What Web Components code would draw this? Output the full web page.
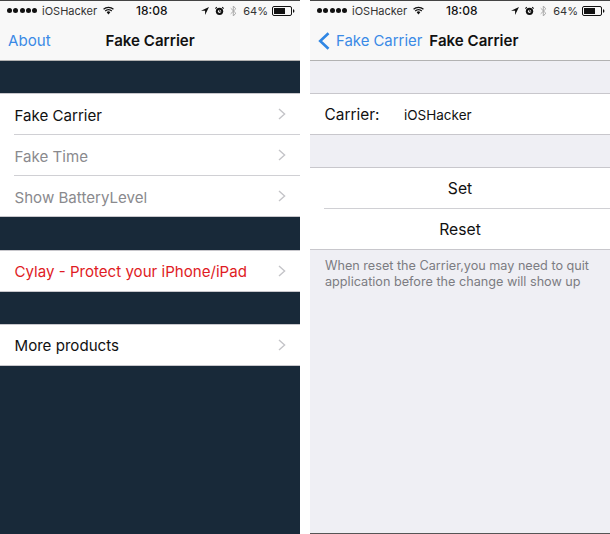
<!DOCTYPE html>
<html><head><meta charset="utf-8">
<style>
html,body{margin:0;padding:0;background:#fff;}
body{width:610px;height:534px;overflow:hidden;font-family:"Inter","Liberation Sans",sans-serif;}
.wrap{display:flex;gap:10px;width:610px;height:534px;}
</style></head><body>
<div class="wrap">
<phone-screen theme="dark">
  <status-bar></status-bar>
  <nav-bar title="Fake Carrier" left="About"></nav-bar>
  <table-group style="--nudge:2px">
    <table-row chevron>Fake Carrier</table-row>
    <table-row chevron muted>Fake Time</table-row>
    <table-row chevron muted>Show BatteryLevel</table-row>
  </table-group>
  <table-group style="margin-top:33px">
    <table-row chevron danger>Cylay - Protect your iPhone/iPad</table-row>
  </table-group>
  <table-group>
    <table-row chevron>More products</table-row>
  </table-group>
</phone-screen>
<phone-screen theme="light">
  <status-bar></status-bar>
  <nav-bar title="Fake Carrier" left="Fake Carrier" back></nav-bar>
  <table-group>
    <table-row label="Carrier:">iOSHacker</table-row>
  </table-group>
  <table-group>
    <table-row center>Set</table-row>
    <table-row center>Reset</table-row>
  </table-group>
  <foot-note>When reset the Carrier,you may need to quit application before the change will show up</foot-note>
</phone-screen>
</div>
<script>
const def=(n,html)=>customElements.define(n,class extends HTMLElement{
  connectedCallback(){ if(this.shadowRoot) return; const r=this.attachShadow({mode:'open'}); r.innerHTML=typeof html==='function'?html(this):html; }
});
def('phone-screen',el=>`<style>
:host{display:block;width:300px;height:534px;box-sizing:border-box;border-top:1px solid #444;overflow:hidden;background:${el.getAttribute('theme')==='dark'?'#182939':'#efeff4'};${el.getAttribute('theme')==='light'?'border-bottom:1px solid #555;':''}}
</style><slot></slot>`);
def('status-bar',`<style>
:host{display:flex;align-items:center;height:20px;padding-bottom:1px;box-sizing:border-box;background:#f8f8f8;color:#333;font:400 11px "Inter","Liberation Sans",sans-serif;}
.l{display:flex;align-items:center;padding-left:7px;flex:0 0 129px;}
.d{display:flex;gap:1.25px;margin-right:5px}
.d i{width:5px;height:5px;border-radius:50%;background:#111;display:block}
.c{width:40px;flex:none;font-size:12px;color:#111;font-weight:500;}
.r{display:flex;align-items:center;margin-left:auto;padding-right:5px;gap:6px}
svg{display:block}
</style>
<div class="l"><span class="d"><i></i><i></i><i></i><i></i><i></i></span><span>iOSHacker</span>
<svg style="margin-left:6px" width="11" height="9" viewBox="0 0 12 9"><path d="M.6 3.2A8 8 0 0 1 11.4 3.2M2.4 5.1A5.2 5.2 0 0 1 9.6 5.1" fill="none" stroke="#111" stroke-width="1.4"/><path d="M4 6.4A2.8 2.8 0 0 1 8 6.4L6 8.8z" fill="#111"/></svg></div>
<span class="c">18:08</span>
<div class="r">
<svg width="8" height="8" viewBox="0 0 9 9"><path d="M9 0 0 4.2h4.6V9z" fill="#111"/></svg>
<svg width="9" height="10" viewBox="0 0 10 10"><circle cx="5" cy="5.4" r="4.1" fill="#111"/><circle cx="5" cy="5.4" r="1.7" fill="#f8f8f8"/><path d="M5 3.8V5.6H6.4" stroke="#111" fill="none" stroke-width=".8"/><path d="M.4 2.4 2 .6M9.6 2.4 8 .6" stroke="#111" stroke-width="1.3"/></svg>
<svg width="7" height="12" viewBox="0 0 7 12"><path d="M.7 3.2 5.8 8.2 3.3 11V1L5.8 3.8.7 8.8" fill="none" stroke="#aaa" stroke-width="1"/></svg>
<span>64%</span>
<svg style="margin-left:-2px" width="23" height="10" viewBox="0 0 23 10"><rect x=".5" y=".5" width="19" height="9" rx="1.5" fill="none" stroke="#111"/><rect x="2" y="2" width="11" height="6" fill="#111"/><path d="M21 3.2c1 .2 1.4.8 1.4 1.8s-.4 1.6-1.4 1.8z" fill="#111"/></svg>
</div>`);
def('nav-bar',el=>{
 const back=el.hasAttribute('back');
 return `<style>
:host{display:flex;align-items:center;height:39px;background:#f8f8f8;border-bottom:1px solid #b2b2b2;box-sizing:content-box;font:400 ${back?14.9:15.1}px "Inter","Liberation Sans",sans-serif;}
.l{display:flex;align-items:center;color:#3b8ae6;padding-left:8px;gap:6px;white-space:nowrap;flex:none}
.t{font-weight:600;font-size:15.1px;color:#111;white-space:nowrap;margin-left:${back?'7':'55'}px}
svg{display:block}
</style><div class="l">${back?'<svg width="12" height="18" viewBox="0 0 12 18"><path d="M10.5 1.2 2.2 9l8.3 7.8" fill="none" stroke="#2f86e4" stroke-width="2.6"/></svg>':''}<span>${el.getAttribute('left')}</span></div><span class="t">${el.getAttribute('title')}</span>`});
def('table-group',`<style>
:host{display:block;margin-top:32px;background:#fff;border-top:1px solid #c8c7cc;border-bottom:1px solid #c8c7cc;box-sizing:border-box}
</style><slot></slot>`);
def('table-row',el=>{
 const c=el.hasAttribute('danger')?'#e01b24':el.hasAttribute('muted')?'#8a8a8e':'#111';
 const center=el.hasAttribute('center');
 const label=el.getAttribute('label');
 return `<style>
:host{display:block;font:400 ${center?15.7:label?15.4:15.1}px "Inter","Liberation Sans",sans-serif;color:${c}}
:host(:not(:first-child)) .in{border-top:1px solid #d0d0d4}
.o{padding-left:14px}
.in{height:40px;display:flex;align-items:center;padding-right:14px;white-space:nowrap;padding-left:${center?0:.5}px;${center?'justify-content:center;':''}}
.tx{padding-top:var(--nudge,0)}
.lb{width:79.5px;flex:none}
.v{font-size:13.5px;padding-top:2px}
svg{margin-left:auto;display:block}
</style><div class="o"><div class="in">${label?`<span class="lb">${label}</span><span class="v"><slot></slot></span>`:'<span class="tx"><slot></slot></span>'}${el.hasAttribute('chevron')?'<svg width="8" height="12" viewBox="0 0 8 12"><path d="M1 1l5.6 5L1 11" fill="none" stroke="#c4c4c8" stroke-width="1.4"/></svg>':''}</div></div>`});
def('foot-note',`<style>
:host{display:block;padding:8px 15px;font:400 12.65px/15.7px "Inter","Liberation Sans",sans-serif;color:#7c7c82}
</style><slot></slot>`);
</script>
</body></html>
